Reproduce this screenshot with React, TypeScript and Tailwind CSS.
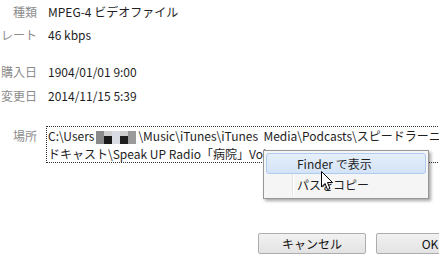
import React from "react";

const FONT = { fontFamily: '"Noto Sans CJK JP", "Noto Sans", sans-serif' };

function Row({ label, children, className = "" }: { label: string; children: React.ReactNode; className?: string }) {
  return (
    <div className={`flex items-center h-[23px] ${className}`}>
      <div className="w-[37px] shrink-0 flex justify-end">
        <span className="whitespace-nowrap text-[#8c8c8c]">{label}</span>
      </div>
      <div className="pl-[11px] whitespace-nowrap text-[#1e1e1e]">{children}</div>
    </div>
  );
}

function Mosaic() {
  const cells = ["#8a8a8a", "#1a1a1a", "#d9dde3", "#202020", "#9a9a9a"];
  return (
    <span className="inline-flex align-middle h-[13px] mx-[2px]">
      {cells.map((c, i) => (
        <span key={i} className="flex flex-col w-[8px]">
          <span className="h-[5px]" style={{ background: i % 2 ? "#cfcfcf" : c }} />
          <span className="h-[8px]" style={{ background: c }} />
        </span>
      ))}
    </span>
  );
}

function Cursor() {
  return (
    <svg className="absolute left-[321px] top-[171px]" width="13" height="20" viewBox="0 0 13 20">
      <path d="M0.5 0.5 L0.5 16 L4 12.5 L6.5 18.5 L9 17.5 L6.5 11.5 L11.5 11.5 Z" fill="#fff" stroke="#000" strokeWidth="1" strokeLinejoin="miter" />
    </svg>
  );
}

export default function App() {
  return (
    <div className="relative w-[439px] h-[273px] overflow-hidden bg-white text-[12px] leading-[18px]" style={FONT}>
      <div className="flex flex-col">
        <Row label="種類">MPEG-4 ビデオファイル</Row>
        <Row label="ビットレート">46 kbps</Row>
        <Row label="購入日" className="mt-[14px]">1904/01/01 9:00</Row>
        <Row label="変更日" className="mt-[1px]">2014/11/15 5:39</Row>

        <div className="flex mt-[19px]">
          <div className="w-[37px] shrink-0 flex justify-end pt-[1px]">
            <span className="whitespace-nowrap text-[#8c8c8c]">場所</span>
          </div>
          <div className="ml-[9px] w-[420px] shrink-0 border border-dotted border-[#333] px-[1px] text-[#1e1e1e]">
            <div className="whitespace-nowrap overflow-hidden h-[18px]">
              C:\Users<Mosaic />\Music\iTunes\iTunes&nbsp; Media\Podcasts\スピードラーニング ポッ
            </div>
            <div className="whitespace-nowrap overflow-hidden h-[17px]">
              ドキャスト\Speak UP Radio「病院」Vol.030.m4v
            </div>
          </div>
        </div>

        <div className="flex gap-[10px] mt-[70px] pl-[258px]">
          <button className="w-[108px] h-[21px] shrink-0 rounded-[2px] border border-[#adadad] bg-gradient-to-b from-[#f2f2f2] to-[#e3e3e3] text-[12px] text-[#111] leading-none">
            キャンセル
          </button>
          <button className="w-[108px] h-[21px] shrink-0 rounded-[2px] border border-[#adadad] bg-gradient-to-b from-[#f2f2f2] to-[#e3e3e3] text-[12px] text-[#111] leading-none">
            OK
          </button>
        </div>
      </div>

      <div className="absolute left-[263px] top-[150px] w-[166px] h-[49px] border border-[#979797] bg-[#f5f5f5] shadow-[2px_2px_3px_rgba(0,0,0,0.35)] p-[2px] flex flex-col">
        <div className="absolute left-[28px] top-[2px] bottom-[2px] w-[2px] border-l border-[#e2e3e3] bg-white" />
        <div className="relative h-[21px] rounded-[3px] border border-[#aecbf0] bg-gradient-to-b from-[#e6effa] to-[#d3e3f6] flex items-center pl-[30px] text-[#1e1e1e]">
          Finder で表示
        </div>
        <div className="relative h-[22px] flex items-center pl-[31px] text-[#1e1e1e]">パスをコピー</div>
      </div>

      <Cursor />
    </div>
  );
}
